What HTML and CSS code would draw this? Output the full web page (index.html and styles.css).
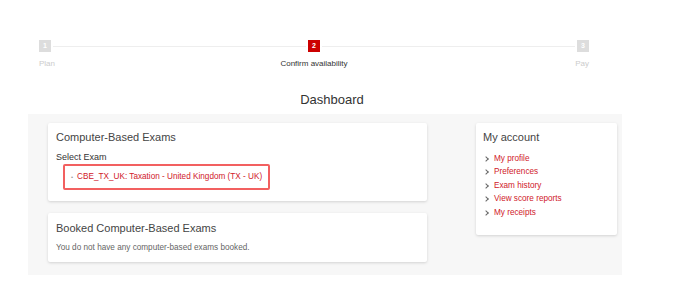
FILE: index.html
```html
<!DOCTYPE html>
<html lang="en">
<head>
  <meta charset="UTF-8">
  <meta name="viewport" content="width=device-width, initial-scale=1.0">
  <title>Dashboard</title>
  <link rel="stylesheet" href="styles.css">
</head>
<body>
  <!-- Booking steps -->
  <div class="stepper">
    <div class="track">
      <span class="step">1</span>
      <span class="line"></span>
      <span class="step active">2</span>
      <span class="line"></span>
      <span class="step">3</span>
    </div>
    <div class="labels">
      <span class="label first">Plan</span>
      <span class="label current">Confirm availability</span>
      <span class="label last">Pay</span>
    </div>
  </div>

  <h1 class="page-title">Dashboard</h1>

  <div class="dashboard">
    <div class="main-col">
      <section class="card exams">
        <h2>Computer-Based Exams</h2>
        <p class="select-label">Select Exam</p>
        <ul class="exam-list">
          <li><a href="#">CBE_TX_UK: Taxation - United Kingdom (TX - UK)</a></li>
        </ul>
      </section>

      <section class="card booked">
        <h2>Booked Computer-Based Exams</h2>
        <p class="empty">You do not have any computer-based exams booked.</p>
      </section>
    </div>

    <aside class="card account">
      <h2>My account</h2>
      <ul class="account-links">
        <li><a href="#">My profile</a></li>
        <li><a href="#">Preferences</a></li>
        <li><a href="#">Exam history</a></li>
        <li><a href="#">View score reports</a></li>
        <li><a href="#">My receipts</a></li>
      </ul>
    </aside>
  </div>
</body>
</html>
```

FILE: styles.css
```css
/* Base styles */
body {
  margin: 0;
  font-family: "Liberation Sans", Arial, sans-serif;
  color: #333;
  background: #fff;
}

a {
  color: #d0202a;
  text-decoration: none;
}

ul {
  list-style: none;
  margin: 0;
  padding: 0;
}

/* Stepper */
.stepper {
  width: 550px;
  margin: 40px 0 0 39px;
}

.track {
  display: flex;
  align-items: center;
  height: 12px;
}

.step {
  width: 12px;
  height: 12px;
  background: #ddd;
  color: #fff;
  font-size: 7px;
  font-weight: bold;
  line-height: 12px;
  text-align: center;
}

.step.active {
  background: #cc0000;
}

.line {
  flex: 1;
  height: 1px;
  margin: 0 2px;
  background: #eee;
}

.labels {
  display: grid;
  grid-template-columns: 1fr auto 1fr;
  margin-top: 7px;
  font-size: 8px;
  line-height: 10px;
  color: #ccc;
}

.label.current {
  color: #333;
}

.label.last {
  justify-self: end;
}

/* Page title */
.page-title {
  width: 608px;
  margin: 23px 0 6px 28px;
  font-size: 13px;
  font-weight: normal;
  line-height: 16px;
  text-align: center;
  color: #333;
}

/* Dashboard panel */
.dashboard {
  display: flex;
  align-items: flex-start;
  width: 569px;
  margin-left: 28px;
  padding: 9px 5px 13px 20px;
  background: #f7f7f7;
}

.main-col {
  width: 379px;
}

.card {
  background: #fff;
  border-radius: 2px;
  box-shadow: 0 1px 3px rgba(0, 0, 0, 0.15);
}

.card h2 {
  margin: 0;
  font-size: 11px;
  font-weight: normal;
  line-height: 14px;
  color: #444;
}

/* Exams card */
.exams {
  padding: 7px 8px 11px;
}

.select-label {
  margin: 7px 0 1px;
  font-size: 9px;
  line-height: 12px;
  color: #333;
}

.exam-list {
  width: 197px;
  margin-left: 7px;
  padding: 6px 0 6px 6px;
  border: 2px solid #f26060;
  border-radius: 2px;
  font-size: 8.2px;
  line-height: 10px;
}

.exam-list li::before {
  content: "\2022";
  margin-right: 4px;
  color: #999;
  font-size: 6px;
}

/* Booked card */
.booked {
  margin-top: 12px;
  padding: 8px 8px 9px;
}

.empty {
  margin: 8px 0 0;
  font-size: 8.2px;
  line-height: 10px;
  color: #666;
}

/* Account card */
.account {
  width: 134px;
  margin-left: 49px;
  padding: 7px 0 16px 7px;
}

.account-links {
  margin-top: 8px;
  font-size: 8.2px;
  line-height: 13.4px;
}

.account-links li {
  position: relative;
  padding-left: 11px;
}

.account-links li::before {
  content: "";
  position: absolute;
  left: 1px;
  top: 5px;
  width: 3px;
  height: 3px;
  border-top: 1px solid #666;
  border-right: 1px solid #666;
  transform: rotate(45deg);
}
```
